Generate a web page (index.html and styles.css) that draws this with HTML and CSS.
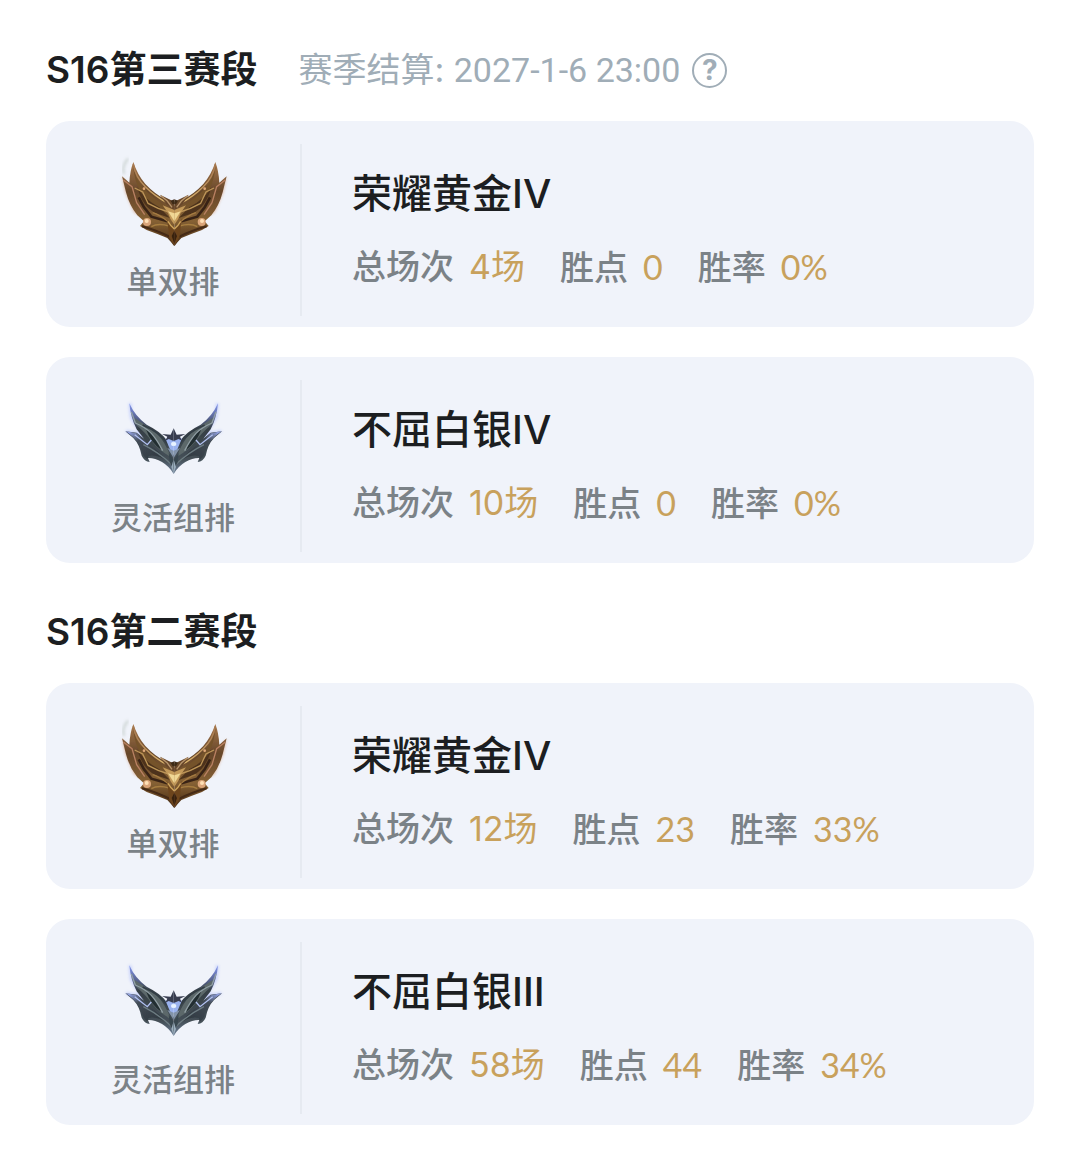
FILE: index.html
```html
<!DOCTYPE html>
<html lang="zh-CN">
<head>
<meta charset="utf-8">
<meta name="viewport" content="width=device-width, initial-scale=1">
<title>S16 赛段</title>
<link rel="stylesheet" href="styles.css">
</head>
<body>
<svg class="sprite" aria-hidden="true">
  <defs>
    <linearGradient id="goldBody" x1="0" y1="0" x2="0" y2="1">
      <stop offset="0" stop-color="#a8794c"/>
      <stop offset="0.35" stop-color="#66462a"/>
      <stop offset="0.7" stop-color="#866134"/>
      <stop offset="1" stop-color="#432812"/>
    </linearGradient>
    <linearGradient id="goldEdge" x1="0" y1="0" x2="1" y2="1">
      <stop offset="0" stop-color="#a67850"/>
      <stop offset="1" stop-color="#e0bb72"/>
    </linearGradient>
    <linearGradient id="silverBody" x1="0" y1="0" x2="0" y2="1">
      <stop offset="0" stop-color="#8498f0"/>
      <stop offset="0.22" stop-color="#56618c"/>
      <stop offset="0.36" stop-color="#363f45"/>
      <stop offset="0.8" stop-color="#455058"/>
      <stop offset="1" stop-color="#70829a"/>
    </linearGradient>
    <linearGradient id="silverWing" x1="0" y1="0" x2="1" y2="1">
      <stop offset="0" stop-color="#a3b4ff"/>
      <stop offset="0.3" stop-color="#434c58"/>
      <stop offset="1" stop-color="#2a3338"/>
    </linearGradient>
    <filter id="soft" x="-10%" y="-10%" width="120%" height="120%"><feGaussianBlur stdDeviation="2"/></filter>
    <filter id="glow" x="-20%" y="-20%" width="140%" height="140%"><feGaussianBlur stdDeviation="5"/></filter>
    <g id="goldHalf">
      <path d="M38 98L48 145L74 205L98 218L72 140Z" fill="#cf8b60" opacity=".55" filter="url(#glow)"/>
      <g filter="url(#soft)">
        <path d="M72 54Q84 92 108 120Q136 150 168 166L195 186V307Q184 292 174 282Q140 268 112 258L92 246L104 232L84 214Q60 184 50 145L38 97L60 116Q62 80 72 54Z" fill="url(#goldBody)"/>
        <path d="M71 64Q76 100 102 132Q128 160 166 184L180 206Q132 186 108 162Q78 134 71 64Z" fill="#74522c"/>
        <path d="M84 130Q104 166 150 190L182 222L140 208Q100 190 84 130Z" fill="#4d331a"/>
        <path d="M72 60Q78 100 108 128Q136 156 176 178" fill="none" stroke="url(#goldEdge)" stroke-width="4"/>
        <path d="M76 132L100 144L116 178Q144 194 178 204" fill="none" stroke="#bd9558" stroke-width="4"/>
        <path d="M42 108L68 128L82 176L106 212" fill="none" stroke="#b98062" stroke-width="4"/>
        <path d="M88 160L104 190L126 218L174 232" fill="none" stroke="#392413" stroke-width="8"/>
        <path d="M130 206Q150 212 178 234" fill="none" stroke="#a57b42" stroke-width="4"/>
        <path d="M126 248Q146 236 180 246" fill="none" stroke="#a67d40" stroke-width="4"/>
        <path d="M98 247Q144 260 180 278" fill="none" stroke="#452914" stroke-width="6"/>
        <path d="M152 152L195 173V200L170 180Z" fill="#68472b"/>
        <path d="M155 155L174 171L188 190" fill="none" stroke="#b9966c" stroke-width="4"/>
        <path d="M195 166L184 170L190 181L195 180Z" fill="#3c2917"/>
        <path d="M160 184L195 198V242Q182 228 176 207Z" fill="#c49a5a"/>
        <path d="M176 202L195 208V232Z" fill="#f0d795"/>
        <path d="M174 228Q187 242 195 258V304Q180 286 178 270Z" fill="#6d451f"/>
        <path d="M176 232Q184 246 195 255" fill="none" stroke="#cfa65e" stroke-width="4"/>
        <path d="M195 260V300L187 276Z" fill="#382010"/>
        <circle cx="113" cy="234" r="12" fill="#dba57a"/>
        <circle cx="112" cy="231" r="6" fill="#ffe0b5"/>
        <circle cx="104" cy="134" r="4" fill="#dfa878"/>
      </g>
    </g>
    <g id="silverHalf">
      <path d="M62 40L66 82L88 118L104 150L86 130L50 124" fill="none" stroke="#8298ff" stroke-width="7" opacity=".45" filter="url(#glow)"/>
      <g filter="url(#soft)">
        <path d="M60 40Q78 80 112 104Q156 126 172 150L193 196V252Q181 230 158 216Q135 203 116 204L121 216Q105 214 97 197Q91 164 72 144L48 124L82 128L104 146L82 118Q64 84 60 40Z" fill="url(#silverBody)"/>
        <path d="M50 124L82 130L116 158L146 184L178 215Q142 191 118 198L114 208Q101 200 98 183Q88 151 50 124Z" fill="url(#silverWing)"/>
        <path d="M76 84Q108 104 140 128Q168 154 184 201Q148 181 127 154Q112 132 76 100Z" fill="#5b686a"/>
        <path d="M110 118Q142 136 156 180Q124 158 110 118Z" fill="#242e31"/>
        <path d="M66 66L78 99Q110 113 126 130Q144 150 160 182" fill="none" stroke="#919fa5" stroke-width="4"/>
        <path d="M100 105Q150 126 176 162" fill="none" stroke="#333e45" stroke-width="5"/>
        <path d="M76 134L114 164L126 150" fill="none" stroke="#b2c2f2" stroke-width="4"/>
        <path d="M102 164Q146 186 188 224" fill="none" stroke="#6d7c82" stroke-width="4"/>
        <path d="M168 145L193 150V183H184Z" fill="#9ab2ee"/>
        <path d="M174 174L193 182V204Z" fill="#8293aa"/>
        <path d="M178 188L193 210V239L181 216Z" fill="#39464f"/>
        <path d="M158 132L184 134L193 115V153L178 147L168 152L174 140Z" fill="#373c50"/>
        <circle cx="191" cy="162" r="6" fill="#e8f3ff"/>
        <path d="M193 208V250L186 231Z" fill="#9baebd"/>
      </g>
    </g>
    <symbol id="gold" viewBox="-4 0 390 330">
      <path d="M44 90Q36 68 56 44" fill="none" stroke="#b4bfb8" stroke-width="6" opacity=".7" filter="url(#glow)"/>
      <use href="#goldHalf"/>
      <use href="#goldHalf" transform="translate(390 0) scale(-1 1)"/>
    </symbol>
    <symbol id="silver" viewBox="-4 -30 390 330">
      <use href="#silverHalf"/>
      <use href="#silverHalf" transform="translate(386 0) scale(-1 1)"/>
    </symbol>
  </defs>
</svg>
<main class="page">
  <section class="season">
    <header class="season-head">
      <h2 class="season-title">S16第三赛段</h2>
      <p class="season-note">赛季结算: <time datetime="2027-01-06T23:00">2027-1-6 23:00</time></p>
      <button class="help" type="button" aria-label="说明">?</button>
    </header>
    <article class="card">
      <div class="queue">
        <svg class="emblem" aria-hidden="true"><use href="#gold"/></svg>
        <span class="queue-name">单双排</span>
      </div>
      <div class="detail">
        <h3 class="rank">荣耀黄金IV</h3>
        <dl class="stats">
          <div class="stat"><dt>总场次</dt><dd>4场</dd></div>
          <div class="stat"><dt>胜点</dt><dd class="figure">0</dd></div>
          <div class="stat"><dt>胜率</dt><dd class="figure">0%</dd></div>
        </dl>
      </div>
    </article>
    <article class="card">
      <div class="queue">
        <svg class="emblem" aria-hidden="true"><use href="#silver"/></svg>
        <span class="queue-name">灵活组排</span>
      </div>
      <div class="detail">
        <h3 class="rank">不屈白银IV</h3>
        <dl class="stats">
          <div class="stat"><dt>总场次</dt><dd>10场</dd></div>
          <div class="stat"><dt>胜点</dt><dd class="figure">0</dd></div>
          <div class="stat"><dt>胜率</dt><dd class="figure">0%</dd></div>
        </dl>
      </div>
    </article>
  </section>
  <section class="season">
    <header class="season-head">
      <h2 class="season-title">S16第二赛段</h2>
    </header>
    <article class="card">
      <div class="queue">
        <svg class="emblem" aria-hidden="true"><use href="#gold"/></svg>
        <span class="queue-name">单双排</span>
      </div>
      <div class="detail">
        <h3 class="rank">荣耀黄金IV</h3>
        <dl class="stats">
          <div class="stat"><dt>总场次</dt><dd>12场</dd></div>
          <div class="stat"><dt>胜点</dt><dd class="figure">23</dd></div>
          <div class="stat"><dt>胜率</dt><dd class="figure">33%</dd></div>
        </dl>
      </div>
    </article>
    <article class="card">
      <div class="queue">
        <svg class="emblem" aria-hidden="true"><use href="#silver"/></svg>
        <span class="queue-name">灵活组排</span>
      </div>
      <div class="detail">
        <h3 class="rank">不屈白银III</h3>
        <dl class="stats">
          <div class="stat"><dt>总场次</dt><dd>58场</dd></div>
          <div class="stat"><dt>胜点</dt><dd class="figure">44</dd></div>
          <div class="stat"><dt>胜率</dt><dd class="figure">34%</dd></div>
        </dl>
      </div>
    </article>
  </section>
</main>
</body>
</html>
```
FILE: styles.css
```css
* {
  box-sizing: border-box;
  margin: 0;
  padding: 0;
}

body {
  background: #fff;
  color: #1c1e21;
  font-family: Inter, "Noto Sans CJK SC", sans-serif;
}

.sprite {
  position: absolute;
  width: 0;
  height: 0;
}

.page {
  display: flex;
  flex-direction: column;
  gap: 44px;
  padding: 45px 46px 36px;
}

.season {
  display: flex;
  flex-direction: column;
  gap: 30px;
}

.season-head {
  display: flex;
  align-items: center;
  height: 50px;
  margin-bottom: -4px;
}

.season-title {
  font-size: 37px;
  font-weight: 600;
  line-height: 50px;
}

.season-note {
  margin-left: 41px;
  color: #a0adb7;
  font-size: 34px;
  font-weight: 400;
  line-height: 50px;
}

.season-note time {
  font-family: Roboto, sans-serif;
}

.help {
  width: 35px;
  height: 35px;
  margin-left: 12px;
  border: 2px solid #a0adb7;
  border-radius: 50%;
  background: none;
  color: #a0adb7;
  font: 700 28px/30px Inter, sans-serif;
}

.card {
  display: flex;
  padding: 23px 24px 11px 0;
  border-radius: 24px;
  background: #f0f3fa;
}

.queue {
  display: flex;
  flex: 0 0 256px;
  flex-direction: column;
  align-items: center;
  height: 172px;
  border-right: 2px solid #e6eaf1;
}

.emblem {
  width: 130px;
  height: 110px;
}

.queue-name {
  color: #7b8287;
  font-size: 31px;
  font-weight: 500;
  line-height: 56px;
}

.detail {
  flex: 1;
  padding: 20px 0 0 50px;
}

.rank {
  font-size: 40px;
  font-weight: 500;
  line-height: 60px;
}

.stats {
  display: flex;
  flex-wrap: wrap;
  gap: 0 35px;
  margin-top: 16px;
  font-size: 34px;
  line-height: 54px;
}

.stat {
  display: flex;
  align-items: baseline;
  gap: 15px;
}

.stat dt {
  color: #7b8287;
  font-weight: 500;
}

.stat dd {
  color: #c8a15c;
}

.stat .figure {
  font-family: Lato, sans-serif;
}
```
